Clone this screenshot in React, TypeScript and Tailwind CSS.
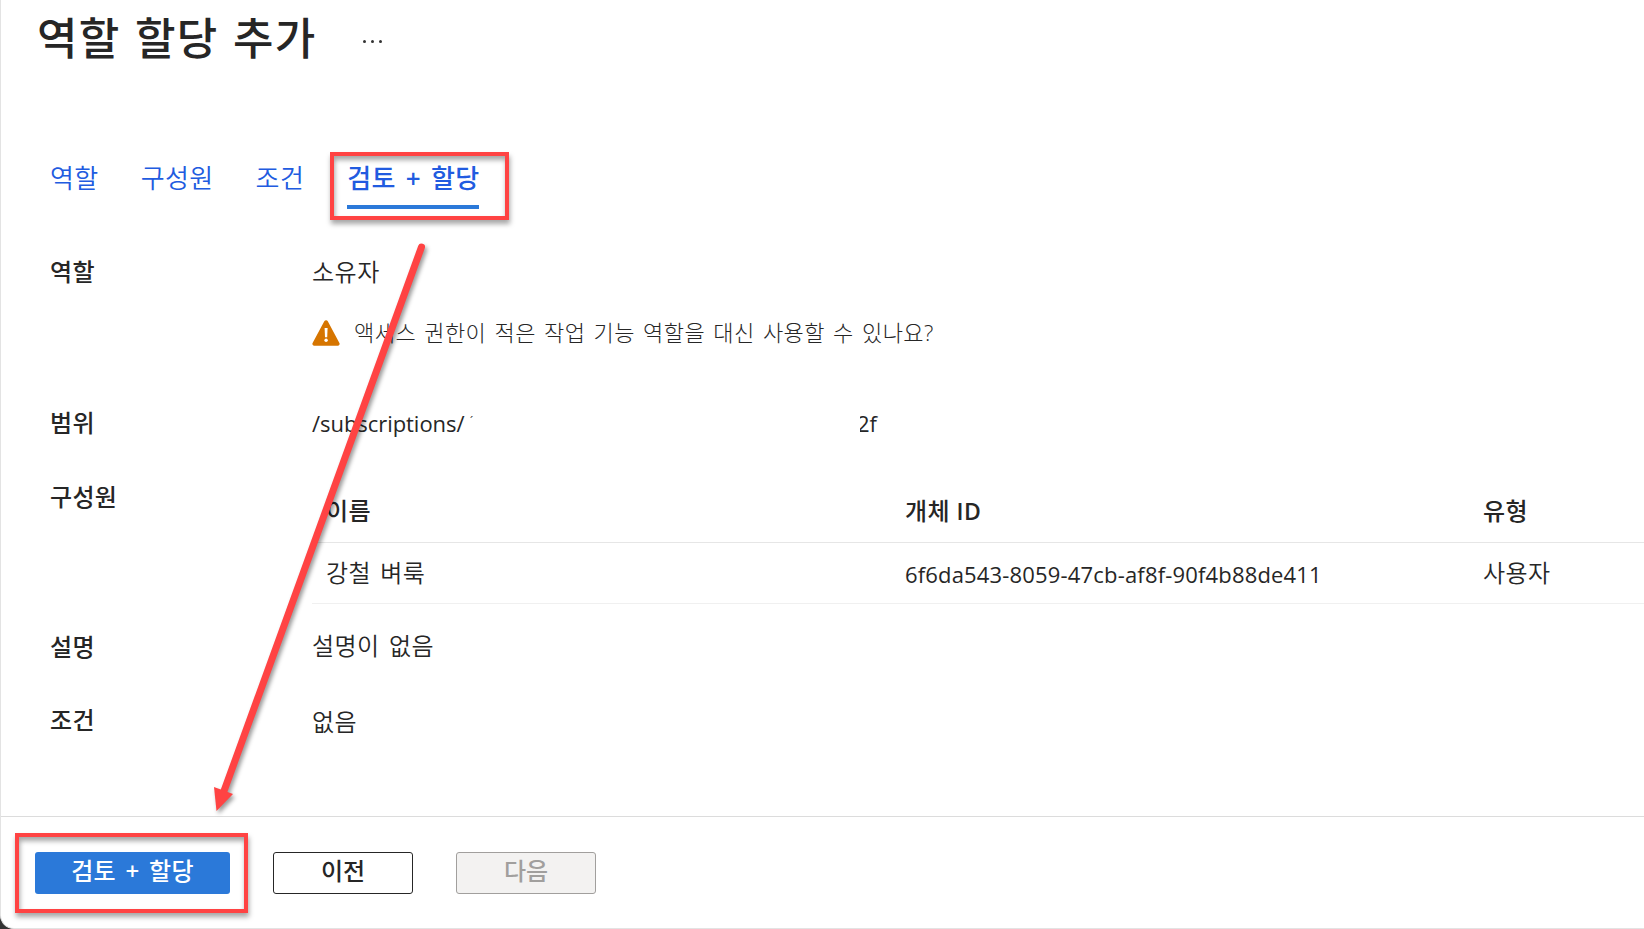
import React from 'react';

const tabs = [
  { id: 'role', label: '역할', className: 'ml-[49px]' },
  { id: 'members', label: '구성원', className: 'ml-[42px]' },
  { id: 'conditions', label: '조건', className: 'ml-[42px]' },
];

const members = [
  { name: '강철 벼룩', objectId: '6f6da543-8059-47cb-af8f-90f4b88de411', type: '사용자' },
];

const WarningIcon = () => (
  <svg width="28" height="26" viewBox="0 0 28 26" className="shrink-0">
    <path
      d="M12.3 1.2a2 2 0 0 1 3.5 0l11.6 21.7a1.9 1.9 0 0 1-1.7 2.8H2.3a1.9 1.9 0 0 1-1.7-2.8z"
      fill="#d67500"
    />
    <path d="M12.6 8h3l-.4 9.3h-2.2z" fill="#fff" />
    <circle cx="14.1" cy="20.2" r="1.7" fill="#fff" />
  </svg>
);

const Label = ({ children }: { children: React.ReactNode }) => (
  <div className="w-[262px] shrink-0 font-medium tracking-[0.3px]">{children}</div>
);

const Highlight = ({ className }: { className: string }) => (
  <div
    className={`pointer-events-none absolute border-4 border-[#ff4343] shadow-[1px_4px_5px_rgba(0,0,0,0.35),inset_1px_4px_5px_rgba(0,0,0,0.35)] ${className}`}
  />
);

// Arrow going from the active tab down to the submit button
const Arrow = () => (
  <svg
    className="pointer-events-none absolute top-[230px] left-[200px] drop-shadow-[2px_3px_2px_rgba(0,0,0,0.4)]"
    width="240"
    height="600"
    viewBox="200 230 240 600"
  >
    <path d="M421.5 247L224 791" stroke="#ff4343" strokeWidth="7" strokeLinecap="round" />
    <path d="M216.5 811L214 787L233 794z" fill="#ff4343" />
  </svg>
);

const App = () => {
  return (
    <div className="relative h-[929px] w-full overflow-hidden bg-[#333333] font-['Open_Sans','Noto_Sans_CJK_KR',sans-serif] text-[#262626]">
      <div className="flex h-full flex-col rounded-bl-[14px] border-b border-l border-[#e3e3e3] bg-white">
        {/* Header */}
        <header className="flex h-[152px] items-start pl-[36px]">
          <h1 className="mt-[8px] w-[280px] text-[44px] leading-[60px] font-medium tracking-[1.2px] whitespace-nowrap [word-spacing:2px]">
            역할 할당 추가
          </h1>
          <div className="mt-[40px] ml-[46px] flex gap-[5px]">
            <span className="size-[3px] rounded-full bg-[#333]" />
            <span className="size-[3px] rounded-full bg-[#333]" />
            <span className="size-[3px] rounded-full bg-[#333]" />
          </div>
        </header>

        {/* Tabs */}
        <nav className="flex h-[104px] items-start text-[26px] leading-[36px] whitespace-nowrap text-[#215be0]">
          {tabs.map((tab) => (
            <a key={tab.id} className={`mt-[8px] font-[350] tracking-[0.4px] ${tab.className}`}>
              {tab.label}
            </a>
          ))}
          <a className="mt-[8px] ml-[43px] w-[132px] border-b-[4px] border-[#2b79d9] pb-[9px] font-medium tracking-[0.3px] [word-spacing:3px]">
            검토 <span className="font-semibold">+</span> 할당
          </a>
        </nav>

        {/* Summary */}
        <main className="flex h-[560px] flex-col pl-[49px] text-[24px] leading-[32px] font-[350] whitespace-nowrap">
          <div className="flex h-[151px]">
            <Label>역할</Label>
            <div>
              <div className="tracking-[0.5px]">소유자</div>
              <div className="mt-[30px] flex items-center gap-[14px] text-[22px]">
                <WarningIcon />
                <span className="-mt-[2px] font-light tracking-[0.45px] [word-spacing:2px]">
                  액세스 권한이 적은 작업 기능 역할을 대신 사용할 수 있나요?
                </span>
              </div>
            </div>
          </div>

          <div className="flex h-[74px]">
            <Label>범위</Label>
            <div className="flex text-[22px] font-normal">
              <span className="w-[158px] tracking-[-0.05px]">/subscriptions/</span>
              {/* The subscription id is masked, only its edges stay visible */}
              <span className="mt-[6px] w-[4px] text-[11px] leading-[16px]">´</span>
              <span className="relative ml-[383px]">
                2f
                <span className="absolute inset-y-0 left-0 w-[3px] bg-white" />
              </span>
            </div>
          </div>

          <div className="flex h-[150px]">
            <Label>구성원</Label>
            <div className="grow">
              <div className="grid h-[62px] grid-cols-[579px_577px_1fr] border-b border-[#e6e6e6] pt-[14px] pl-[14px] font-medium tracking-[0.4px]">
                <div>이름</div>
                <div>
                  개체 <span className="text-[23px] font-semibold">ID</span>
                </div>
                <div className="pl-px">유형</div>
              </div>
              {members.map((member) => (
                <div
                  key={member.objectId}
                  className="grid h-[61px] grid-cols-[579px_577px_1fr] border-b border-[#f0f0f0] pt-[14px] pl-[14px]"
                >
                  <div className="tracking-[0.3px] [word-spacing:3px]">{member.name}</div>
                  <div className="pt-px text-[22px] font-normal tracking-[0.17px]">{member.objectId}</div>
                  <div className="pl-px tracking-[0.4px]">{member.type}</div>
                </div>
              ))}
            </div>
          </div>

          <div className="flex h-[73px]">
            <Label>설명</Label>
            <div className="-mt-px tracking-[0.4px] [word-spacing:3px]">설명이 없음</div>
          </div>

          <div className="flex">
            <Label>조건</Label>
            <div className="mt-[2px] tracking-[0.4px]">없음</div>
          </div>
        </main>

        {/* Footer */}
        <footer className="flex grow items-start gap-[43px] border-t border-[#dcdcdc] pt-[35px] pl-[34px] text-[24px] leading-[36px] font-medium">
          <button className="h-[42px] w-[195px] rounded-[3px] bg-[#2b79d9] pb-[4px] tracking-[0.3px] text-white [word-spacing:3px]">
            검토 <span className="font-semibold">+</span> 할당
          </button>
          <button className="h-[42px] w-[140px] rounded-[3px] border border-[#262626] bg-white pb-[4px]">이전</button>
          <button className="h-[42px] w-[140px] rounded-[3px] border border-[#a19f9d] bg-[#f3f2f1] pb-[4px] text-[#a19f9d]">
            다음
          </button>
        </footer>
      </div>

      <Highlight className="top-[152px] left-[330px] h-[68px] w-[179px]" />
      <Highlight className="top-[833px] left-[15px] h-[80px] w-[233px]" />
      <Arrow />
    </div>
  );
};

export default App;
